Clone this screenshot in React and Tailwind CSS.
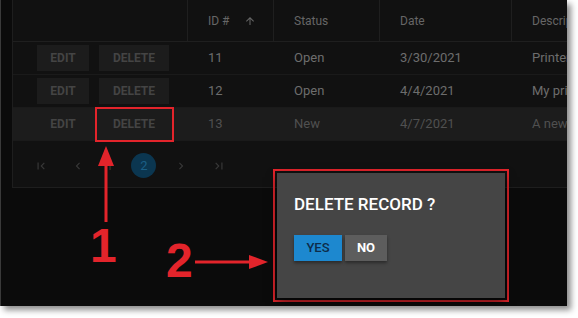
const ROWS = [
  { id: 11, status: "Open", date: "3/30/2021", desc: "Printer jam on floor 2", active: false },
  { id: 12, status: "Open", date: "4/4/2021", desc: "My printer is offline", active: false },
  { id: 13, status: "New", date: "4/7/2021", desc: "A new request", active: true },
];

function Cell({ w, className = "", children }) {
  return (
    <div className={`flex shrink-0 items-center pl-[20px] ${className}`} style={{ width: w }}>
      {children}
    </div>
  );
}

function PagerIcon({ children, className = "" }) {
  return <span className={`flex h-[24px] w-[24px] items-center justify-center text-[#383838] ${className}`}>{children}</span>;
}

export default function App() {
  return (
    <div className="relative h-[318px] w-[578px] overflow-hidden bg-white font-['Roboto',sans-serif]">
      <div className="relative h-[306px] w-[567px] overflow-hidden border-l border-[#3a3a3a] bg-[#0b0b0b] shadow-[4px_4px_6px_rgba(0,0,0,0.45)]">
        {/* data grid */}
        <div className="ml-[11px] w-[600px] border border-t-0 border-[#1e1e1e] bg-[#111111]">
          <div className="flex h-[42px] border-b border-[#1f1f1f] text-[12px] text-[#666666]">
            <div className="w-[175px] shrink-0 border-r border-[#1f1f1f]" />
            <Cell w={86} className="gap-[14px] border-r border-[#1f1f1f]">
              <span>ID #</span>
              <svg width="12" height="12" viewBox="0 0 24 24" fill="#666666">
                <path d="M4 12l1.41 1.41L11 7.83V20h2V7.83l5.58 5.59L20 12l-8-8-8 8z" />
              </svg>
            </Cell>
            <Cell w={106} className="border-r border-[#1f1f1f]">Status</Cell>
            <Cell w={132} className="border-r border-[#1f1f1f]">Date</Cell>
            <Cell w={100}>Description</Cell>
          </div>

          {ROWS.map((row) => (
            <div
              key={row.id}
              className={`flex h-[33px] border-b border-[#1a1a1a] text-[13px] ${
                row.active ? "bg-[#1c1c1c] text-[#505050]" : "text-[#6d6d6d]"
              }`}
            >
              <div className="flex w-[175px] shrink-0 items-center gap-[10px] pl-[24px]">
                <span
                  className={`flex h-[26px] w-[52px] items-center justify-center text-[12px] font-bold text-[#444444] ${
                    row.active ? "" : "bg-[#1c1c1c]"
                  }`}
                >
                  EDIT
                </span>
                <span
                  className={`flex h-[26px] w-[70px] items-center justify-center text-[12px] font-bold text-[#444444] ${
                    row.active ? "" : "bg-[#1c1c1c]"
                  }`}
                >
                  DELETE
                </span>
              </div>
              <Cell w={86}>{row.id}</Cell>
              <Cell w={106}>{row.status}</Cell>
              <Cell w={132}>{row.date}</Cell>
              <Cell w={100} className="whitespace-nowrap">{row.desc}</Cell>
            </div>
          ))}

          <div className="flex h-[46px] items-center pl-[16px] pt-[3px] text-[13px]">
            <PagerIcon>
              <svg width="14" height="14" viewBox="0 0 24 24" fill="currentColor">
                <path d="M18.41 16.59L13.82 12l4.59-4.59L17 6l-6 6 6 6zM6 6h2v12H6z" />
              </svg>
            </PagerIcon>
            <PagerIcon className="ml-[13px]">
              <svg width="14" height="14" viewBox="0 0 24 24" fill="currentColor">
                <path d="M15.41 7.41L14 6l-6 6 6 6 1.41-1.41L10.83 12z" />
              </svg>
            </PagerIcon>
            <span className="ml-[16px] text-[#383838]">1</span>
            <span className="ml-[18px] flex h-[25px] w-[25px] items-center justify-center rounded-full bg-[#0b3650] text-[#1b5f86]">
              2
            </span>
            <PagerIcon className="ml-[13px]">
              <svg width="14" height="14" viewBox="0 0 24 24" fill="currentColor">
                <path d="M8.59 16.59L13.17 12 8.59 7.41 10 6l6 6-6 6z" />
              </svg>
            </PagerIcon>
            <PagerIcon className="ml-[14px]">
              <svg width="14" height="14" viewBox="0 0 24 24" fill="currentColor">
                <path d="M5.59 7.41L10.18 12l-4.59 4.59L7 18l6-6-6-6zM16 6h2v12h-2z" />
              </svg>
            </PagerIcon>
          </div>
        </div>

        {/* highlight box around third delete */}
        <div className="absolute left-[94px] top-[107px] h-[35px] w-[79px] border-2 border-[#e3242b]" />

        {/* arrow 1 */}
        <svg className="absolute left-[94px] top-[144px]" width="22" height="82" viewBox="0 0 22 82">
          <path d="M11 2 L19 22 L3 22 Z" fill="#e3242b" />
          <rect x="9.5" y="20" width="3" height="58" fill="#e3242b" />
        </svg>
        <span className="absolute left-[89px] top-[222px] font-['Liberation_Sans',Arial,sans-serif] text-[48px] font-bold leading-none text-[#e3242b]">
          1
        </span>

        {/* arrow 2 */}
        <span className="absolute left-[165px] top-[237px] font-['Liberation_Sans',Arial,sans-serif] text-[48px] font-bold leading-none text-[#e3242b]">
          2
        </span>
        <svg className="absolute left-[194px] top-[253px]" width="76" height="18" viewBox="0 0 76 18">
          <rect x="0" y="7.5" width="58" height="3" fill="#e3242b" />
          <path d="M54 2 L73 9 L54 16 Z" fill="#e3242b" />
        </svg>

        {/* confirm dialog */}
        <div className="absolute left-[272px] top-[169px] h-[133px] w-[236px] border-2 border-[#e3242b] p-[2px]">
          <div className="h-full w-full bg-[#454545] px-[17px] pt-[20px] shadow-[0_4px_10px_rgba(0,0,0,0.6)]">
            <p className="text-[17px] font-medium leading-[22px] text-white">DELETE RECORD ?</p>
            <div className="mt-[20px] flex gap-[3px]">
              <button className="flex h-[26px] w-[48px] items-center justify-center bg-[#1d88cf] text-[13px] font-medium text-[#0d2c4a] shadow-[0_2px_3px_rgba(0,0,0,0.4)]">
                YES
              </button>
              <button className="flex h-[26px] w-[42px] items-center justify-center bg-[#5d5d5d] text-[13px] font-bold text-white shadow-[0_2px_3px_rgba(0,0,0,0.4)]">
                NO
              </button>
            </div>
          </div>
        </div>
      </div>
    </div>
  );
}
